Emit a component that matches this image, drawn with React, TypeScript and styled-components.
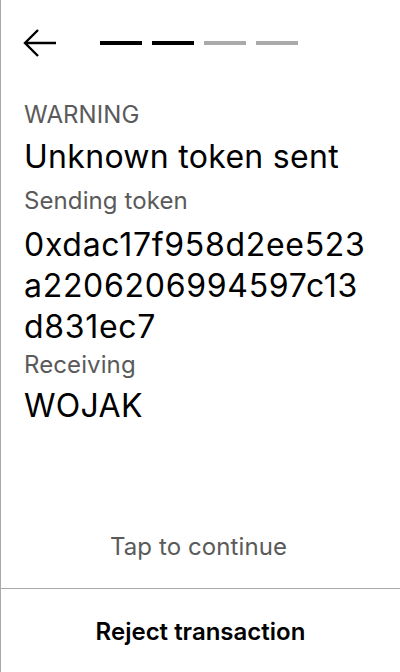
import React from "react";
import styled, { createGlobalStyle } from "styled-components";

const GlobalStyle = createGlobalStyle`
  html, body {
    margin: 0;
    padding: 0;
    background: #fff;
  }
  body {
    font-family: Inter, "Noto Sans", sans-serif;
    color: #000;
  }
`;

const Screen = styled.div`
  box-sizing: border-box;
  width: 400px;
  height: 672px;
  display: flex;
  flex-direction: column;
  border-left: 1px solid #aaa;
  background: #fff;
`;

const Header = styled.div`
  display: flex;
  align-items: center;
  gap: 43px;
  height: 38px;
  padding: 24px 22px 0;
`;

const BackButton = styled.button`
  display: flex;
  align-items: center;
  padding: 0;
  border: none;
  background: none;
  cursor: pointer;
`;

const Steps = styled.div`
  display: flex;
  gap: 10px;
`;

const Step = styled.span<{ $done?: boolean }>`
  width: 42px;
  height: 4px;
  background: ${(p) => (p.$done ? "#000" : "#aaa")};
`;

const Body = styled.div`
  flex: 1;
  display: flex;
  flex-direction: column;
  padding: 39px 30px 0 23px;
`;

const Label = styled.div<{ $gap?: number }>`
  font-size: 24px;
  line-height: 28px;
  letter-spacing: 0.1px;
  color: #5a5a5a;
  margin-top: ${(p) => p.$gap ?? 0}px;
`;

const Value = styled.div<{ $gap?: number; $lh?: number; $wide?: boolean }>`
  font-size: 32px;
  line-height: ${(p) => p.$lh ?? 38}px;
  letter-spacing: ${(p) => (p.$wide ? 0.7 : 0.3)}px;
  margin-top: ${(p) => p.$gap ?? 0}px;
  word-break: break-all;
`;

const Spacer = styled.div`
  flex: 1;
`;

const Hint = styled.div`
  text-align: center;
  font-size: 24px;
  line-height: 28px;
  letter-spacing: 0.1px;
  color: #5a5a5a;
  padding: 0 0 27px 3px;
`;

const Footer = styled.button`
  height: 84px;
  border: none;
  border-top: 1px solid #aaa;
  background: #fff;
  font-family: Inter, "Noto Sans", sans-serif;
  font-size: 24px;
  line-height: 28px;
  font-weight: 600;
  color: #000;
  cursor: pointer;
  padding: 2px 0 0;
`;

const BackArrow = () => (
  <svg width="34" height="30" viewBox="0 0 34 30">
    <path
      d="M33 15H3M15 2L2 15l13 13"
      fill="none"
      stroke="#000"
      strokeWidth="2.4"
    />
  </svg>
);

export default function App() {
  return (
    <>
      <GlobalStyle />
      <Screen>
        <Header>
          <BackButton>
            <BackArrow />
          </BackButton>
          <Steps>
            <Step $done />
            <Step $done />
            <Step />
            <Step />
          </Steps>
        </Header>
        <Body>
          <Label>WARNING</Label>
          <Value $gap={9}>Unknown token sent</Value>
          <Label $gap={11}>Sending token</Label>
          <Value $gap={9} $lh={41} $wide>
            0xdac17f958d2ee523a2206206994597c13d831ec7
          </Value>
          <Label $gap={4}>Receiving</Label>
          <Value $gap={8}>WOJAK</Value>
          <Spacer />
          <Hint>Tap to continue</Hint>
        </Body>
        <Footer>Reject transaction</Footer>
      </Screen>
    </>
  );
}
